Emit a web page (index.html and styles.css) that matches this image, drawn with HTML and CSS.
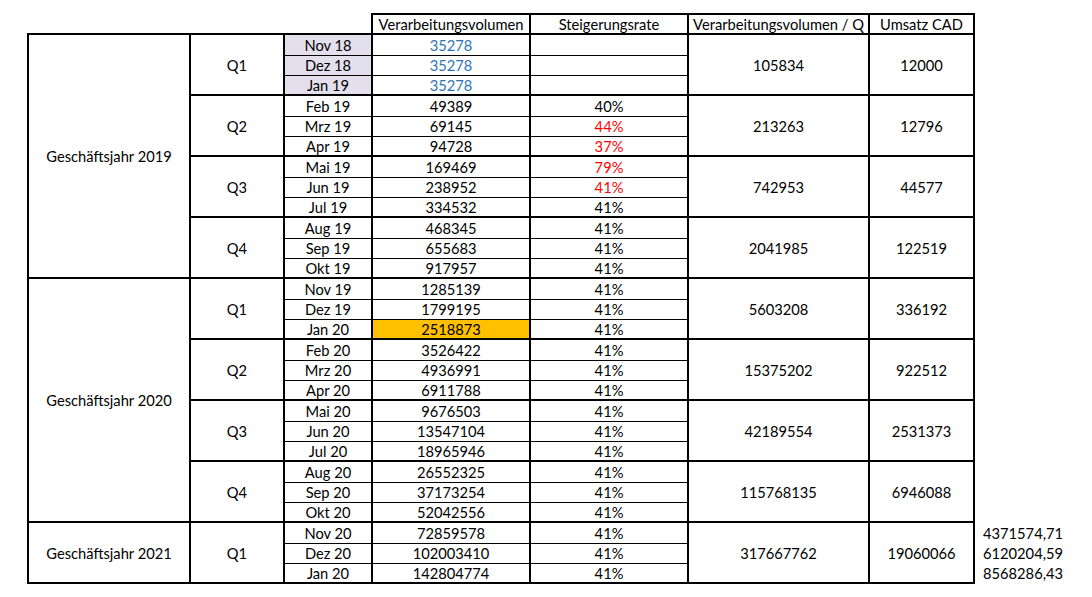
FILE: index.html
```html
<!DOCTYPE html>
<html lang="de">
<head>
<meta charset="utf-8">
<title>Verarbeitungsvolumen</title>
<link rel="stylesheet" href="styles.css">
</head>
<body>
<table class="sheet">
  <colgroup>
    <col class="c-year"><col class="c-q"><col class="c-month"><col class="c-vol"><col class="c-rate"><col class="c-qvol"><col class="c-rev"><col class="c-ext">
  </colgroup>
  <tr class="head">
    <td class="blank" colspan="3"></td>
    <td class="h">Verarbeitungsvolumen</td>
    <td class="h">Steigerungsrate</td>
    <td class="h">Verarbeitungsvolumen / Q</td>
    <td class="h">Umsatz CAD</td>
    <td class="ext"></td>
  </tr>
  <!-- FY 2019 -->
  <tr class="r21 qs">
    <td class="big" rowspan="12">Geschäftsjahr 2019</td>
    <td class="big" rowspan="3">Q1</td>
    <td class="lav">Nov 18</td><td class="blue">35278</td><td></td>
    <td class="big" rowspan="3">105834</td><td class="big" rowspan="3">12000</td><td class="ext"></td>
  </tr>
  <tr class="r20"><td class="lav">Dez 18</td><td class="blue">35278</td><td></td><td class="ext"></td></tr>
  <tr class="r20"><td class="lav">Jan 19</td><td class="blue">35278</td><td></td><td class="ext"></td></tr>
  <tr class="r21 qs">
    <td class="big" rowspan="3">Q2</td>
    <td>Feb 19</td><td>49389</td><td>40%</td>
    <td class="big" rowspan="3">213263</td><td class="big" rowspan="3">12796</td><td class="ext"></td>
  </tr>
  <tr class="r20"><td>Mrz 19</td><td>69145</td><td class="red">44%</td><td class="ext"></td></tr>
  <tr class="r20"><td>Apr 19</td><td>94728</td><td class="red">37%</td><td class="ext"></td></tr>
  <tr class="r21 qs">
    <td class="big" rowspan="3">Q3</td>
    <td>Mai 19</td><td>169469</td><td class="red">79%</td>
    <td class="big" rowspan="3">742953</td><td class="big" rowspan="3">44577</td><td class="ext"></td>
  </tr>
  <tr class="r20"><td>Jun 19</td><td>238952</td><td class="red">41%</td><td class="ext"></td></tr>
  <tr class="r20"><td>Jul 19</td><td>334532</td><td>41%</td><td class="ext"></td></tr>
  <tr class="r21 qs">
    <td class="big" rowspan="3">Q4</td>
    <td>Aug 19</td><td>468345</td><td>41%</td>
    <td class="big" rowspan="3">2041985</td><td class="big" rowspan="3">122519</td><td class="ext"></td>
  </tr>
  <tr class="r20"><td>Sep 19</td><td>655683</td><td>41%</td><td class="ext"></td></tr>
  <tr class="r20"><td>Okt 19</td><td>917957</td><td>41%</td><td class="ext"></td></tr>
  <!-- FY 2020 -->
  <tr class="r21 qs">
    <td class="big" rowspan="12">Geschäftsjahr 2020</td>
    <td class="big" rowspan="3">Q1</td>
    <td>Nov 19</td><td>1285139</td><td>41%</td>
    <td class="big" rowspan="3">5603208</td><td class="big" rowspan="3">336192</td><td class="ext"></td>
  </tr>
  <tr class="r20"><td>Dez 19</td><td>1799195</td><td>41%</td><td class="ext"></td></tr>
  <tr class="r20"><td>Jan 20</td><td class="orange">2518873</td><td>41%</td><td class="ext"></td></tr>
  <tr class="r21 qs">
    <td class="big" rowspan="3">Q2</td>
    <td>Feb 20</td><td>3526422</td><td>41%</td>
    <td class="big" rowspan="3">15375202</td><td class="big" rowspan="3">922512</td><td class="ext"></td>
  </tr>
  <tr class="r20"><td>Mrz 20</td><td>4936991</td><td>41%</td><td class="ext"></td></tr>
  <tr class="r20"><td>Apr 20</td><td>6911788</td><td>41%</td><td class="ext"></td></tr>
  <tr class="r21 qs">
    <td class="big" rowspan="3">Q3</td>
    <td>Mai 20</td><td>9676503</td><td>41%</td>
    <td class="big" rowspan="3">42189554</td><td class="big" rowspan="3">2531373</td><td class="ext"></td>
  </tr>
  <tr class="r20"><td>Jun 20</td><td>13547104</td><td>41%</td><td class="ext"></td></tr>
  <tr class="r20"><td>Jul 20</td><td>18965946</td><td>41%</td><td class="ext"></td></tr>
  <tr class="r21 qs">
    <td class="big" rowspan="3">Q4</td>
    <td>Aug 20</td><td>26552325</td><td>41%</td>
    <td class="big" rowspan="3">115768135</td><td class="big" rowspan="3">6946088</td><td class="ext"></td>
  </tr>
  <tr class="r20"><td>Sep 20</td><td>37173254</td><td>41%</td><td class="ext"></td></tr>
  <tr class="r20"><td>Okt 20</td><td>52042556</td><td>41%</td><td class="ext"></td></tr>
  <!-- FY 2021 -->
  <tr class="r21 qs">
    <td class="big" rowspan="3">Geschäftsjahr 2021</td>
    <td class="big" rowspan="3">Q1</td>
    <td>Nov 20</td><td>72859578</td><td>41%</td>
    <td class="big" rowspan="3">317667762</td><td class="big" rowspan="3">19060066</td><td class="ext num">4371574,71</td>
  </tr>
  <tr class="r20"><td>Dez 20</td><td>102003410</td><td>41%</td><td class="ext num">6120204,59</td></tr>
  <tr class="r20 last"><td>Jan 20</td><td>142804774</td><td>41%</td><td class="ext num">8568286,43</td></tr>
</table>
</body>
</html>
```

FILE: styles.css
```css
html, body {
  margin: 0;
  padding: 0;
  background: #ffffff;
}

.sheet {
  border-collapse: collapse;
  table-layout: fixed;
  width: 1046px;
  margin: 13px 0 0 27px;
  font-family: "Lato", "Liberation Sans", sans-serif;
  font-size: 14.7px;
  color: #000000;
}

.c-year { width: 162px; }
.c-q { width: 94px; }
.c-month { width: 88px; }
.c-vol { width: 158px; }
.c-rate { width: 158px; }
.c-qvol { width: 181px; }
.c-rev { width: 105px; }
.c-ext { width: 100px; }

.sheet td {
  padding: 0;
  text-align: center;
  vertical-align: middle;
  line-height: 16px;
  white-space: nowrap;
  border-top: 1px solid #000;
  border-bottom: 1px solid #000;
  border-left: 2px solid #000;
  border-right: 2px solid #000;
}

.head { height: 20px; }
.r20 { height: 20px; }
.r21 { height: 21px; }

.sheet td.h {
  border: 2px solid #000;
}

.sheet td.blank {
  border: none;
}

.sheet .qs td {
  border-top: 2px solid #000;
}

.sheet td.big {
  border: 2px solid #000;
}

.sheet .last td {
  border-bottom: 2px solid #000;
}

.sheet td.ext,
.sheet .qs td.ext,
.sheet .last td.ext {
  border-top: none;
  border-bottom: none;
  border-right: none;
  text-align: left;
  padding-left: 8px;
}

.lav { background: #e4dfec; }
.orange { background: #ffc000; }
.blue { color: #2e75b6; }
.red { color: #ff0000; }
```
